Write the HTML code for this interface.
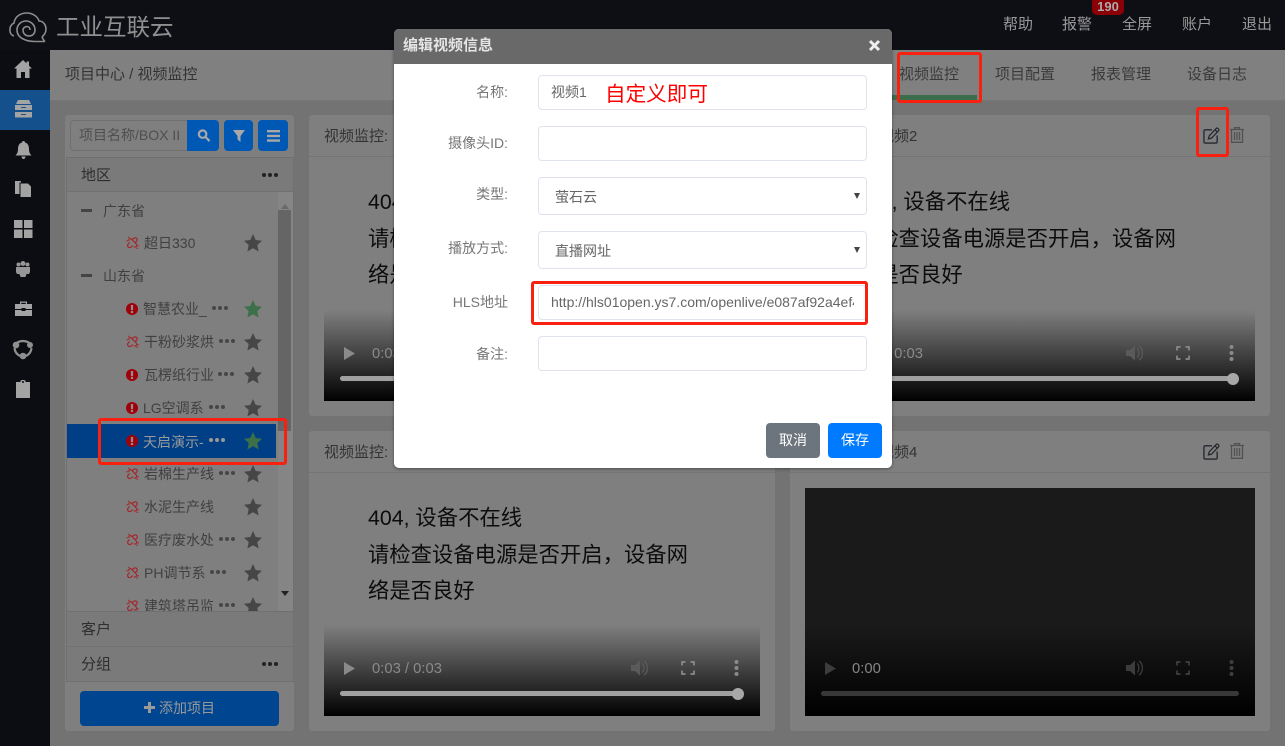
<!DOCTYPE html>
<html lang="zh"><head><meta charset="utf-8"><title>视频监控</title>
<style>
*{box-sizing:border-box}
html,body{margin:0;padding:0;width:1285px;height:746px;overflow:hidden;background:#737373;font-family:"Liberation Sans","Noto Sans CJK SC",sans-serif;font-size:14px}
.a{position:absolute}
.t{position:absolute;white-space:nowrap;line-height:20px}
.menu{color:#9a9a9a;font-size:15px;top:15px}
.tab{color:#3a3a3a;font-size:15px;top:65px}
.card{position:absolute;background:#7f7f7f;border-radius:3px}
.vid{position:absolute;overflow:hidden;background:#7f7f7f}
.grad{position:absolute;left:0;right:0;bottom:0;height:91px;background:linear-gradient(rgba(0,0,0,0),#000)}
.vt{position:absolute;left:44px;top:26px;font-size:21.33px;line-height:36px;color:#0c0c0c;white-space:nowrap}
.vt span{font-family:"Noto Sans CJK TC",sans-serif}
.time{position:absolute;bottom:37px;color:#8a8a8a;font-size:14.800px;line-height:20px;white-space:nowrap}
.bar{position:absolute;height:5px;bottom:20px;left:16px;background:#a0a0a0;border-radius:3px}
.row{position:absolute;left:0;width:212px;height:33px;margin-top:1px}
.row svg.d{top:13px !important}
.name{position:absolute;top:6px;color:#404040;font-size:14px;line-height:20px;white-space:nowrap}
.lbl{position:absolute;right:777px;color:#777;font-size:14px;line-height:20px;white-space:nowrap}
.inp{position:absolute;left:538px;width:329px;background:#fff;border:1px solid #dfe3ee;border-radius:4px;color:#666;font-size:14px}
.acc{position:absolute;left:66px;width:228px;height:35px;background:#7a7a7a;border:1px solid #707070;color:#2e2e2e;font-size:15px;line-height:35px;padding-left:14px}
svg{position:absolute;display:block;overflow:visible}
.red{position:absolute;border:3px solid #f8200f;border-radius:3px}
</style></head><body>
<svg width="0" height="0" style="position:absolute"><defs>
<symbol id="star" viewBox="0 0 18 18"><path d="M9 0l2.700 6 6.300.7-4.700 4.300 1.300 6.500L9 14.200 3.400 17.500l1.300-6.500L0 6.700 6.300 6z"/></symbol>
<symbol id="ex" viewBox="0 0 12 12"><circle cx="6" cy="6" r="6" fill="#a00009"/><rect x="4.900" y="2" width="2.200" height="5.200" fill="#8f8f8f"/><rect x="4.900" y="8" width="2.200" height="2" fill="#8f8f8f"/></symbol>
<symbol id="lnk" viewBox="0 0 14 14"><path d="M6.500 3.500L8 2.200c1.300-1 3-1 3.700.2.700 1.100.3 2.500-.8 3.300L10 6.500M4 6.500L2.600 7.800c-1.100 1-1.200 2.600-.2 3.500 1 .9 2.500.7 3.500-.2l1.300-1.300M3.500 4.800C2.700 4 3 2.700 4 2.300c1-.4 1.800.3 2.500 1.100l4.200 4.200c.8.900 1.200 2 .6 3-.6 1-2 1-2.800.2M.5 4.500h1.500M3 .3v1.300M12 12v1.500M13.800 10H12.500" fill="none" stroke="#a5262b" stroke-width="1.300"/></symbol>
<symbol id="dots" viewBox="0 0 16 4"><circle cx="2" cy="2" r="2"/><circle cx="8" cy="2" r="2"/><circle cx="14" cy="2" r="2"/></symbol>
<symbol id="edit" viewBox="0 0 18 18"><path d="M9.500 3H2.200C1.500 3 1 3.500 1 4.200v11.600c0 .7.500 1.200 1.200 1.200h11.600c.7 0 1.200-.5 1.200-1.200V9" fill="none" stroke="#23272f" stroke-width="1.400"/><path d="M6.500 9.500L14 1.500c.5-.5 1.200-.5 1.700 0l.8.800c.5.500.5 1.200 0 1.700L9 11.800l-3.300.8zM12.800 3l2.500 2.500" fill="none" stroke="#23272f" stroke-width="1.300"/></symbol>
<symbol id="trash" viewBox="0 0 14 16"><path d="M0 2.500h14M4.500 2.500V.7h5v1.800M1.500 2.500v12.800h11V2.500M4.500 5v8M7 5v8M9.500 5v8" fill="none" stroke="#525252" stroke-width="1.300"/></symbol>
</defs></svg>

<!-- top bar -->
<div class="a" style="left:0;top:0;width:1285px;height:50px;background:#0e0f15"></div>
<div class="a" style="left:0;top:50px;width:50px;height:696px;background:#0c0d13"></div>
<svg style="left:8px;top:12px" width="40" height="31" viewBox="0 0 40 31" fill="none" stroke="#8c8c8c" stroke-width="1.600"><path d="M6 24C1 23 0 14 6 11 7 4 13 1 19 1 25 1 30 5 31 9 36 9 38 14 38 17 38 21 36 23 34 25"/><path d="M34 25C35 27 36 29 37 29.500L27 29.500C20 29.500 9 27 9 18 9 12 14 9 18 9 23 9 27 13 27 18 27 22 24 24 21 24 18 24 15 22 15 18 15 16 17 14.500 19 14.500 21 14.500 22 16 22 18"/></svg>
<div class="t" style="left:56px;top:12px;font-size:23.500px;line-height:30px;color:#8f8f8f;font-weight:400">工业互联云</div>
<div class="t menu" style="left:1003px">帮助</div>
<div class="t menu" style="left:1062px">报警</div>
<div class="t menu" style="left:1122px">全屏</div>
<div class="t menu" style="left:1182px">账户</div>
<div class="t menu" style="left:1242px">退出</div>
<div class="a" style="left:1092px;top:0;width:32px;height:15px;background:#8b0007;border-radius:0 0 5px 5px;color:#ababab;font-size:13px;font-weight:bold;line-height:14px;text-align:center">190</div>

<!-- sidebar -->
<div class="a" style="left:0;top:90px;width:50px;height:40px;background:#14508c"></div>
<svg style="left:14px;top:60px" width="18" height="18" viewBox="0 0 18 18" fill="#a3a3a3"><path d="M9 0L0 8.500h2.500V18H7v-6h4v6h4.500V8.500H18l-3-2.800V1.500h-2.500v1.900z"/></svg>
<svg style="left:15px;top:100px" width="17" height="18" viewBox="0 0 17 18" fill="#a3a3a3"><path d="M3 0h11l2 4H1zM0 5h17v5H0zM0 12h17v5.500H0z"/><rect x="6" y="7" width="5" height="1" fill="#14508c"/><rect x="6" y="14" width="5" height="1" fill="#14508c"/></svg>
<svg style="left:15px;top:141px" width="17" height="18" viewBox="0 0 17 18" fill="#a3a3a3"><path d="M8.500 0C9.500 0 10 .7 10 1.500 13 2.300 14 5 14 8c0 3 1 5 2.500 6.500H.5C2 13 3 11 3 8c0-3 1-5.700 4-6.500C7 .7 7.500 0 8.500 0zM6.500 15.500h4c0 1.500-1 2.500-2 2.500s-2-1-2-2.500z"/></svg>
<svg style="left:15px;top:181px" width="16" height="16" viewBox="0 0 16 16" fill="#a3a3a3"><path d="M0 0h6v1.500H4.500V13H0zM5.500 2.500H13L16 5.500V16H5.500z"/></svg>
<svg style="left:14px;top:220px" width="19" height="18" viewBox="0 0 19 18" fill="#a3a3a3"><path d="M0 0h8.500v8H0zM10 0h8.500v8H10zM0 9.500h8.500V18H0zM10 9.500h8.500V18H10z"/></svg>
<svg style="left:16px;top:261px" width="14" height="17" viewBox="0 0 14 17" fill="#969696"><circle cx="7" cy="2.500" r="2.500"/><circle cx="2.500" cy="3.500" r="2"/><circle cx="11.500" cy="3.500" r="2"/><path d="M0 6h14v5l-1 2h-2.500L9.500 16h-5L3.500 13H1L0 11z"/></svg>
<svg style="left:15px;top:301px" width="17" height="15" viewBox="0 0 17 15" fill="#a3a3a3"><path d="M5 3V.5h7V3h-1.200V1.700H6.200V3zM0 3h17v5h-6.500V7h-4v1H0zM0 9h6.500v1h4V9H17v6H0z"/></svg>
<svg style="left:12px;top:339px" width="22" height="20" viewBox="0 0 22 20" fill="none" stroke="#8f8f8f" stroke-width="2.200"><path d="M5 3.500Q11 .5 17 3.500M2.500 9Q3 14.500 8 17M19.500 9Q19 14.500 14 17"/><circle cx="4" cy="6" r="3.300" fill="#8f8f8f" stroke="none"/><circle cx="18" cy="6" r="3" fill="#8f8f8f" stroke="none"/><circle cx="11" cy="17" r="3.300" fill="#8f8f8f" stroke="none"/></svg>
<svg style="left:16px;top:380px" width="14" height="18" viewBox="0 0 14 18" fill="#a3a3a3"><path d="M0 2h4.500V.8C4.500.3 6 0 7 0s2.500.3 2.500.8V2H14v16H0z"/><circle cx="7" cy="2" r="1" fill="#0c0d13"/></svg>

<!-- header band -->
<div class="a" style="left:50px;top:50px;width:1235px;height:51px;background:#808080;border-bottom:1px solid #767676"></div>
<div class="t" style="left:65px;top:65px;font-size:15px;color:#333">项目中心 / 视频监控</div>
<div class="t tab" style="left:899px">视频监控</div>
<div class="t tab" style="left:995px">项目配置</div>
<div class="t tab" style="left:1091px">报表管理</div>
<div class="t tab" style="left:1187px">设备日志</div>
<div class="a" style="left:892px;top:95px;width:85px;height:5px;background:#3a6e4a"></div>

<!-- left panel -->
<div class="card" style="left:65px;top:115px;width:229px;height:616px"></div>
<div class="a" style="left:70px;top:120px;width:120px;height:31px;border:1px solid #6f6f6f;border-radius:4px;background:#7f7f7f"></div>
<div class="t" style="left:79px;top:125px;color:#4f4f4f;font-size:14px">项目名称/BOX II</div>
<div class="a" style="left:187px;top:120px;width:32px;height:31px;background:#0058b5;border-radius:0 4px 4px 0"></div>
<div class="a" style="left:224px;top:120px;width:29px;height:31px;background:#0058b5;border-radius:4px"></div>
<div class="a" style="left:258px;top:120px;width:30px;height:31px;background:#0058b5;border-radius:4px"></div>
<svg style="left:197px;top:129px" width="14" height="13" viewBox="0 0 14 14" fill="none" stroke="#a8a8a8" stroke-width="2.400"><circle cx="5.500" cy="5.500" r="4"/><path d="M8.500 8.500L13 13"/></svg>
<svg style="left:232px;top:130px" width="14" height="12" viewBox="0 0 14 12" fill="#a8a8a8"><path d="M0 0h12L7.500 6v6L4.500 9.500V6z" transform="translate(1)"/></svg>
<svg style="left:267px;top:130px" width="13" height="12" viewBox="0 0 13 12" fill="#a8a8a8"><path d="M0 0h13v2.400H0zM0 4.700h13v2.400H0zM0 9.400h13v2.400H0z"/></svg>

<div class="acc" style="top:157px">地区</div>
<svg style="left:262px;top:173px;fill:#222" width="16" height="4"><use href="#dots"/></svg>

<!-- tree -->
<div class="a" style="left:66px;top:192px;width:228px;height:419px;overflow:hidden;background:#7f7f7f;border-left:1px solid #707070;border-right:1px solid #707070">
  <div class="a" style="left:211px;top:0;width:15px;height:419px;background:#858585"></div>
  <div class="a" style="left:211px;top:18px;width:13px;height:221px;background:#656565"></div>
  <div class="a" style="left:214px;top:12px;width:0;height:0;border:4px solid transparent;border-top:0;border-bottom:5px solid #6a6a6a"></div>
  <div class="a" style="left:214px;top:399px;width:0;height:0;border:4px solid transparent;border-bottom:0;border-top:5px solid #222"></div>
  <div class="a" style="left:14px;top:17px;width:11px;height:3px;background:#444"></div>
  <div class="t" style="left:36px;top:9px;color:#404040">广东省</div>
  <div class="a" style="left:14px;top:82px;width:11px;height:3px;background:#444"></div>
  <div class="t" style="left:36px;top:74px;color:#404040">山东省</div>

  <div class="row" style="top:34px"><svg style="left:59px;top:9px" width="13" height="14"><use href="#lnk"/></svg><div class="name" style="left:77px">超日330</div><svg style="left:177px;top:7px;fill:#464646" width="18" height="18"><use href="#star"/></svg></div>

  <div class="row" style="top:100px"><svg style="left:59px;top:10px" width="12" height="12"><use href="#ex"/></svg><div class="name" style="left:76px">智慧农业_</div><svg class="d" style="left:145px;fill:#464646" width="16" height="4"><use href="#dots"/></svg><svg style="left:177px;top:7px;fill:#3c7048" width="18" height="18"><use href="#star"/></svg></div>
  <div class="row" style="top:133px"><svg style="left:59px;top:9px" width="13" height="14"><use href="#lnk"/></svg><div class="name" style="left:77px">干粉砂浆烘</div><svg class="d" style="left:152px;fill:#464646" width="16" height="4"><use href="#dots"/></svg><svg style="left:177px;top:7px;fill:#464646" width="18" height="18"><use href="#star"/></svg></div>
  <div class="row" style="top:166px"><svg style="left:59px;top:10px" width="12" height="12"><use href="#ex"/></svg><div class="name" style="left:77px">瓦楞纸行业</div><svg class="d" style="left:151px;fill:#464646" width="16" height="4"><use href="#dots"/></svg><svg style="left:177px;top:7px;fill:#464646" width="18" height="18"><use href="#star"/></svg></div>
  <div class="row" style="top:199px"><svg style="left:59px;top:10px" width="12" height="12"><use href="#ex"/></svg><div class="name" style="left:76px">LG空调系</div><svg class="d" style="left:142px;fill:#464646" width="16" height="4"><use href="#dots"/></svg><svg style="left:177px;top:7px;fill:#464646" width="18" height="18"><use href="#star"/></svg></div>
  <div class="row" style="top:232px;left:-1px;margin-top:0;width:210px;height:34px;background:#003f85"><svg style="left:60px;top:11px" width="12" height="12"><use href="#ex"/></svg><div class="name" style="left:77px;top:8px;color:#9a9a9a">天启演示-</div><svg style="left:143px;top:14px;fill:#9a9a9a" width="16" height="4"><use href="#dots"/></svg><svg style="left:178px;top:8px;fill:#3c7048" width="18" height="18"><use href="#star"/></svg></div>
  <div class="row" style="top:265px"><svg style="left:59px;top:9px" width="13" height="14"><use href="#lnk"/></svg><div class="name" style="left:77px">岩棉生产线</div><svg class="d" style="left:152px;fill:#464646" width="16" height="4"><use href="#dots"/></svg><svg style="left:177px;top:7px;fill:#464646" width="18" height="18"><use href="#star"/></svg></div>
  <div class="row" style="top:298px"><svg style="left:59px;top:9px" width="13" height="14"><use href="#lnk"/></svg><div class="name" style="left:77px">水泥生产线</div><svg style="left:177px;top:7px;fill:#464646" width="18" height="18"><use href="#star"/></svg></div>
  <div class="row" style="top:331px"><svg style="left:59px;top:9px" width="13" height="14"><use href="#lnk"/></svg><div class="name" style="left:77px">医疗废水处</div><svg class="d" style="left:152px;fill:#464646" width="16" height="4"><use href="#dots"/></svg><svg style="left:177px;top:7px;fill:#464646" width="18" height="18"><use href="#star"/></svg></div>
  <div class="row" style="top:364px"><svg style="left:59px;top:9px" width="13" height="14"><use href="#lnk"/></svg><div class="name" style="left:77px">PH调节系</div><svg class="d" style="left:143px;fill:#464646" width="16" height="4"><use href="#dots"/></svg><svg style="left:177px;top:7px;fill:#464646" width="18" height="18"><use href="#star"/></svg></div>
  <div class="row" style="top:397px"><svg style="left:59px;top:9px" width="13" height="14"><use href="#lnk"/></svg><div class="name" style="left:77px">建筑塔吊监</div><svg class="d" style="left:152px;fill:#464646" width="16" height="4"><use href="#dots"/></svg><svg style="left:177px;top:7px;fill:#464646" width="18" height="18"><use href="#star"/></svg></div>
</div>

<div class="acc" style="top:611px;height:36px">客户</div>
<div class="acc" style="top:646px;height:36px">分组</div>
<svg style="left:262px;top:662px;fill:#222" width="16" height="4"><use href="#dots"/></svg>
<div class="a" style="left:80px;top:691px;width:199px;height:35px;background:#004590;border-radius:4px"></div>
<svg style="left:144px;top:702px" width="11" height="11" viewBox="0 0 11 11" fill="#9a9a9a"><path d="M4 0h3v4h4v3H7v4H4V7H0V4h4z"/></svg>
<div class="t" style="left:159px;top:698px;color:#9a9a9a;font-size:14px">添加项目</div>

<!-- cards -->
<div class="card" style="left:309px;top:115px;width:466px;height:301px"></div>
<div class="card" style="left:790px;top:115px;width:480px;height:301px"></div>
<div class="card" style="left:309px;top:431px;width:466px;height:300px"></div>
<div class="card" style="left:790px;top:431px;width:480px;height:300px"></div>
<div class="a" style="left:309px;top:156px;width:466px;height:1px;background:#747474"></div>
<div class="a" style="left:790px;top:156px;width:480px;height:1px;background:#747474"></div>
<div class="a" style="left:309px;top:472px;width:466px;height:1px;background:#747474"></div>
<div class="a" style="left:790px;top:472px;width:480px;height:1px;background:#747474"></div>
<div class="t" style="left:324px;top:127px;font-size:15px;color:#333">视频监控:</div>
<div class="t" style="left:324px;top:443px;font-size:15px;color:#333">视频监控:</div>
<div class="t" style="left:879px;top:127px;font-size:15px;color:#333">视频2</div>
<div class="t" style="left:879px;top:443px;font-size:15px;color:#333">视频4</div>
<svg style="left:1203px;top:127px" width="17" height="17"><use href="#edit"/></svg>
<svg style="left:1230px;top:127px" width="14" height="16"><use href="#trash"/></svg>
<svg style="left:1203px;top:443px" width="17" height="17"><use href="#edit"/></svg>
<svg style="left:1230px;top:443px" width="14" height="16"><use href="#trash"/></svg>

<!-- video 1 -->
<div class="vid" style="left:324px;top:173px;width:436px;height:228px">
 <div class="vt" style="left:44px;top:11px">404, 设备不在线<br>请检查设备电源是否开启<span>，</span>设备网<br>络是否良好</div><div class="grad"></div>
 <svg style="left:20px;top:174px" width="11" height="13" viewBox="0 0 11 13" fill="#8a8a8a"><path d="M0 0l11 6.500L0 13z"/></svg>
 <div class="time" style="left:48px">0:03 / 0:03</div>
 <div class="bar" style="width:398px"></div>
</div>
<!-- video 2 -->
<div class="vid" style="left:805px;top:173px;width:450px;height:228px">
 <div class="vt" style="left:51px;top:11px">404, 设备不在线<br>请检查设备电源是否开启<span>，</span>设备网<br>络是否良好</div><div class="grad"></div>
 <div class="time" style="left:48px">0:03 / 0:03</div>
 <div class="a" style="left:16px;bottom:20px;width:412px;height:5px;background:#a0a0a0;border-radius:3px"></div>
 <div class="a" style="left:422px;bottom:16px;width:12px;height:12px;background:#a8a8a8;border-radius:50%"></div>
 <svg style="left:321px;top:172px" width="18" height="16" viewBox="0 0 18 16" fill="#5a5a5a"><path d="M0 5h4l5-4.500v15L4 11H0z"/><path d="M11 3.500c2.500 1.500 2.500 7.500 0 9M13 1c4.500 2.500 4.500 11.500 0 14" fill="none" stroke="#5a5a5a" stroke-width="1.300"/></svg>
 <svg style="left:371px;top:173px" width="14" height="14" viewBox="0 0 14 14" fill="none" stroke="#8a8a8a" stroke-width="1.700"><path d="M1 4.500V1h3.500M9.500 1H13v3.500M13 9.500V13H9.500M4.500 13H1V9.500"/></svg>
 <svg style="left:424px;top:172px" width="5" height="16" viewBox="0 0 5 16" fill="#8a8a8a"><circle cx="2.500" cy="2" r="2"/><circle cx="2.500" cy="8" r="2"/><circle cx="2.500" cy="14" r="2"/></svg>
</div>

<!-- video 3 -->
<div class="vid" style="left:324px;top:488px;width:436px;height:228px">
 <div class="vt" style="left:44px;top:12px">404, 设备不在线<br>请检查设备电源是否开启<span>，</span>设备网<br>络是否良好</div><div class="grad"></div>
 <svg style="left:20px;top:174px" width="11" height="13" viewBox="0 0 11 13" fill="#8a8a8a"><path d="M0 0l11 6.500L0 13z"/></svg>
 <div class="time" style="left:48px">0:03 / 0:03</div>
 <div class="bar" style="width:398px"></div>
 <div class="a" style="left:408px;bottom:16px;width:12px;height:12px;background:#a8a8a8;border-radius:50%"></div>
 <svg style="left:307px;top:172px" width="18" height="16" viewBox="0 0 18 16" fill="#5a5a5a"><path d="M0 5h4l5-4.500v15L4 11H0z"/><path d="M11 3.500c2.500 1.500 2.500 7.500 0 9M13 1c4.500 2.500 4.500 11.500 0 14" fill="none" stroke="#5a5a5a" stroke-width="1.300"/></svg>
 <svg style="left:357px;top:173px" width="14" height="14" viewBox="0 0 14 14" fill="none" stroke="#8a8a8a" stroke-width="1.700"><path d="M1 4.500V1h3.500M9.500 1H13v3.500M13 9.500V13H9.500M4.500 13H1V9.500"/></svg>
 <svg style="left:410px;top:172px" width="5" height="16" viewBox="0 0 5 16" fill="#8a8a8a"><circle cx="2.500" cy="2" r="2"/><circle cx="2.500" cy="8" r="2"/><circle cx="2.500" cy="14" r="2"/></svg>
</div>
<!-- video 4 -->
<div class="vid" style="left:805px;top:488px;width:450px;height:228px;background:#1a1a1a">
 <div class="grad"></div>
 <svg style="left:20px;top:174px" width="11" height="13" viewBox="0 0 11 13" fill="#3c3c3c"><path d="M0 0l11 6.500L0 13z"/></svg>
 <div class="time" style="left:47px;color:#868686">0:00</div>
 <div class="a" style="left:16px;bottom:20px;width:418px;height:5px;background:#383838;border-radius:3px"></div>
 <svg style="left:321px;top:172px" width="18" height="16" viewBox="0 0 18 16" fill="#3c3c3c"><path d="M0 5h4l5-4.500v15L4 11H0z"/><path d="M11 3.500c2.500 1.500 2.500 7.500 0 9M13 1c4.500 2.500 4.500 11.500 0 14" fill="none" stroke="#3c3c3c" stroke-width="1.300"/></svg>
 <svg style="left:371px;top:173px" width="14" height="14" viewBox="0 0 14 14" fill="none" stroke="#3f3f3f" stroke-width="1.700"><path d="M1 4.500V1h3.500M9.500 1H13v3.500M13 9.500V13H9.500M4.500 13H1V9.500"/></svg>
 <svg style="left:424px;top:172px" width="5" height="16" viewBox="0 0 5 16" fill="#3f3f3f"><circle cx="2.500" cy="2" r="2"/><circle cx="2.500" cy="8" r="2"/><circle cx="2.500" cy="14" r="2"/></svg>
</div>

<!-- red boxes behind modal -->
<div class="red" style="left:897px;top:52px;width:85px;height:51px"></div>
<div class="red" style="left:1196px;top:107px;width:33px;height:50px"></div>
<div class="red" style="left:98px;top:418px;width:189px;height:47px"></div>

<!-- modal -->
<div class="a" style="left:394px;top:29px;width:498px;height:439px;background:#fff;border-radius:5px;box-shadow:0 1px 3px rgba(0,0,0,.4)"></div>
<div class="a" style="left:394px;top:29px;width:498px;height:35px;background:#696969;border-radius:5px 5px 0 0"></div>
<div class="t" style="left:403px;top:36px;color:#e4e4e4;font-size:15px;font-weight:bold">编辑视频信息</div>
<svg style="left:869px;top:40px" width="11" height="11" viewBox="0 0 11 11" fill="none" stroke="#eee" stroke-width="3"><path d="M1 1l9 9M10 1l-9 9"/></svg>

<div class="lbl" style="top:82px">名称:</div>
<div class="lbl" style="top:133px">摄像头ID:</div>
<div class="lbl" style="top:184px">类型:</div>
<div class="lbl" style="top:238px">播放方式:</div>
<div class="lbl" style="top:292px">HLS地址</div>
<div class="lbl" style="top:344px">备注:</div>

<div class="inp" style="top:75px;height:35px;line-height:33px;padding-left:12px">视频1</div>
<div class="t" style="left:605px;top:81px;font-size:20.600px;line-height:28px;color:#f00">自定义即可</div>
<div class="inp" style="top:126px;height:35px"></div>
<div class="inp" style="top:177px;height:38px;line-height:39px;padding-left:16px">萤石云</div>
<div class="a" style="left:854px;top:193px;width:0;height:0;border:3.500px solid transparent;border-bottom:0;border-top:6px solid #444"></div>
<div class="inp" style="top:231px;height:38px;line-height:39px;padding-left:16px">直播网址</div>
<div class="a" style="left:854px;top:247px;width:0;height:0;border:3.500px solid transparent;border-bottom:0;border-top:6px solid #444"></div>
<div class="inp" style="top:285px;height:35px"></div>
<div class="a" style="left:551px;top:285px;width:303px;height:35px;overflow:hidden;color:#666;font-size:14px;line-height:35px;white-space:nowrap">http://hls01open.ys7.com/openlive/e087af92a4ef4ab0</div>
<div class="inp" style="top:336px;height:35px"></div>
<div class="a" style="left:766px;top:423px;width:54px;height:35px;background:#6c757d;border-radius:4px;color:#fff;font-size:14px;line-height:35px;text-align:center">取消</div>
<div class="a" style="left:828px;top:423px;width:54px;height:35px;background:#007bff;border-radius:4px;color:#fff;font-size:14px;line-height:35px;text-align:center">保存</div>
<div class="red" style="left:531px;top:281px;width:337px;height:44px"></div>
</body></html>
